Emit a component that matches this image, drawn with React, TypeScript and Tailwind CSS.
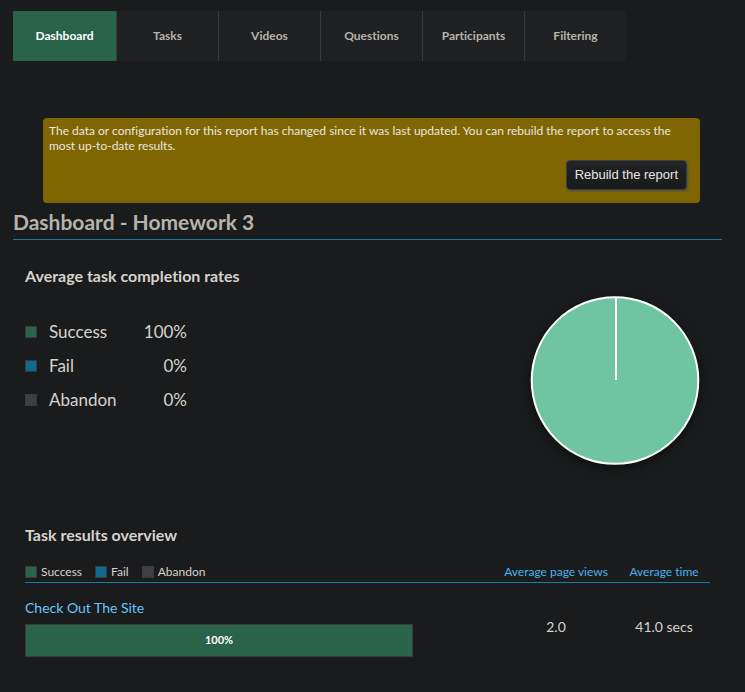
import React from "react";

const tabs = ["Tasks", "Videos", "Questions", "Participants", "Filtering"];

const outcomes = [
  { name: "Success", value: "100%", color: "bg-[#29634a]" },
  { name: "Fail", value: "0%", color: "bg-[#0f6a91]" },
  { name: "Abandon", value: "0%", color: "bg-[#3d3f42]" },
];

function Swatch({ color }: { color: string }) {
  return <span className={`inline-block size-3 shrink-0 border border-[#383a3c] ${color}`} />;
}

function Tabs() {
  return (
    <nav className="flex h-[50px] text-[12px] font-bold text-[#b8b3aa]">
      <a
        href="#dashboard"
        aria-current="page"
        className="flex w-[104px] items-center justify-center border-r border-[#38393b] bg-[#29634a] text-white"
      >
        Dashboard
      </a>
      {tabs.map((tab) => (
        <a
          key={tab}
          href={`#${tab.toLowerCase()}`}
          className="flex w-[102px] items-center justify-center border-r border-[#38393b] bg-[#1f2022] last:w-[101px] last:border-r-0"
        >
          {tab}
        </a>
      ))}
    </nav>
  );
}

function Notice() {
  return (
    <section className="mt-[57px] mr-[22px] ml-[30px] rounded bg-[#806600] pt-[5px] pr-[13px] pb-[13px] pl-[6px] text-[#e8e6e3]">
      <p className="text-[12px] leading-[15px]">
        The data or configuration for this report has changed since it was last updated. You can rebuild the report to
        access the most up-to-date results.
      </p>
      <div className="mt-[7px] flex justify-end">
        <button
          type="button"
          className="h-[30px] rounded border border-[#3c3e40] bg-linear-to-b from-[#212325] to-[#181a1b] px-2 font-['Liberation_Sans',Arial,sans-serif] text-[13px] shadow-[1px_1px_2px_#464a4e]"
        >
          Rebuild the report
        </button>
      </div>
    </section>
  );
}

function Pie() {
  return (
    <svg
      width="190"
      height="190"
      viewBox="0 0 190 190"
      role="img"
      aria-label="Success 100%"
      className="drop-shadow-[0_3px_5px_rgba(0,0,0,0.5)]"
    >
      <circle cx="95" cy="95.5" r="83.3" fill="#6fc5a2" stroke="#fff" strokeWidth="2" />
      <path d="M96 12V95" stroke="#fff" strokeWidth="2" />
    </svg>
  );
}

export default function App() {
  return (
    <main className="min-h-screen bg-[#1a1b1c] pt-[11px] pr-[23px] pb-[35px] pl-[13px] font-['Lato','Liberation_Sans',sans-serif] text-[#d6d3cd] [font-variant-ligatures:no-common-ligatures]">
      <Tabs />
      <Notice />
      <h1 className="mt-[5px] border-b border-[#1b7697] pb-[3px] text-[21px] leading-7 font-bold text-[#b8b3aa]">
        Dashboard - Homework 3
      </h1>

      <div className="pr-3 pl-3">
        <section className="mt-[26px] flex h-[228px] justify-between">
          <div>
            <h2 className="text-[16px] leading-5 font-bold">Average task completion rates</h2>
            <dl className="mt-[29px] text-[17px] leading-[34px]">
              {outcomes.map((o) => (
                <div key={o.name} className="flex w-[162px] items-center">
                  <Swatch color={o.color} />
                  <dt className="ml-3">{o.name}</dt>
                  <dd className="ml-auto">{o.value}</dd>
                </div>
              ))}
            </dl>
          </div>
          <div className="mt-[19px]">
            <Pie />
          </div>
        </section>

        <section className="mt-[31px]">
          <h2 className="text-[16px] leading-5 font-bold">Task results overview</h2>
          <table className="mt-[17px] w-full border-collapse">
            <thead className="border-b border-[#157bab] text-[12px] leading-5">
              <tr>
                <th className="p-0 font-normal" scope="col">
                  <div className="flex gap-[13px]">
                    {outcomes.map((o) => (
                      <span key={o.name} className="flex items-center gap-1">
                        <Swatch color={o.color} />
                        {o.name}
                      </span>
                    ))}
                  </div>
                </th>
                <th className="w-[124px] p-0 font-normal text-[#46b5ee]" scope="col">
                  <a href="#page-views">Average page views</a>
                </th>
                <th className="w-[92px] p-0 font-normal text-[#46b5ee]" scope="col">
                  <a href="#time">Average time</a>
                </th>
              </tr>
            </thead>
            <tbody>
              <tr className="text-[14px]">
                <td className="px-0 pt-[15px] pb-0">
                  <a href="#check-out-the-site" className="block leading-5 text-[#66c8ff]">
                    Check Out The Site
                  </a>
                  <div className="mt-[6px] mr-[81px] flex h-[33px] items-center justify-center border border-[#383a3c] bg-[#29634a] text-[11px] font-bold text-white">
                    100%
                  </div>
                </td>
                <td className="px-0 pt-[15px] pb-[2px] text-center">2.0</td>
                <td className="px-0 pt-[15px] pb-[2px] text-center">41.0 secs</td>
              </tr>
            </tbody>
          </table>
        </section>
      </div>
    </main>
  );
}
